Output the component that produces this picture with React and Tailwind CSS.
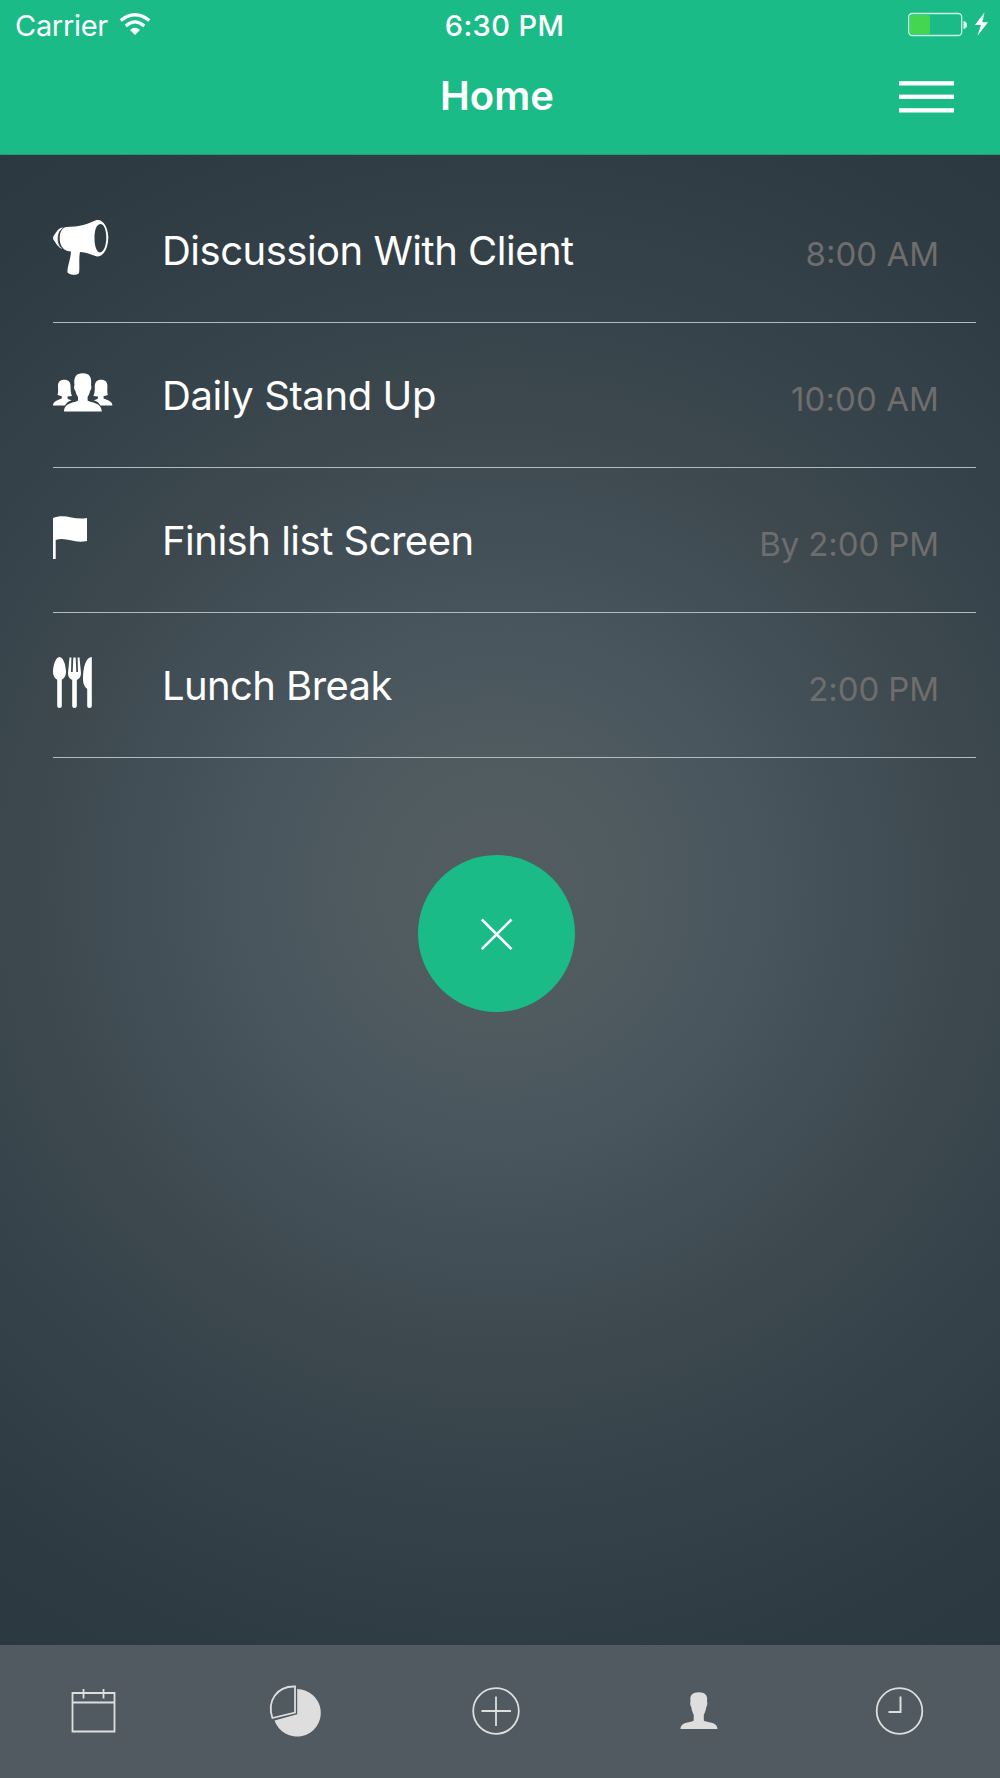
import React from "react";

function StatusBar() {
  return (
    <div className="flex h-[50px] items-center pl-[15px] pr-[11px] text-[29px] leading-none">
      <div className="flex flex-1 items-center gap-[11px]">
        <span className="font-normal tracking-[-0.3px]">Carrier</span>
        <svg width="32" height="24" viewBox="0 0 32 24" fill="none" stroke="#fff">
          <path d="M1.700 7.500 Q16 -3.800 30.300 7.500" strokeWidth="3.400" />
          <path d="M6.800 13 Q16 4.800 25.200 13" strokeWidth="3.200" />
          <path d="M11 17 Q16 12.300 21 17 L16 22 Z" fill="#fff" stroke="none" />
        </svg>
      </div>
      <span className="pl-[5px] font-medium tracking-[0.400px]">6:30 PM</span>
      <div className="flex flex-1 items-center justify-end">
        <svg width="82" height="26" viewBox="0 0 82 26">
          <rect x="1.700" y="1.500" width="53" height="22" rx="3.500" fill="none" stroke="#c9f3e2" strokeWidth="1.300" />
          <rect x="3" y="3" width="20" height="19" rx="1.500" fill="#44d651" />
          <path d="M56.500 9 Q60 9.500 60 13 Q60 16.500 56.500 17 Z" fill="#e8faf3" />
          <path d="M77.500 0.500 L68 13 H74 L70.500 23.800 L81 10.300 H75.300 Z" fill="#fff" />
        </svg>
      </div>
    </div>
  );
}

function Megaphone() {
  return (
    <svg width="60" height="60" viewBox="0 0 60 60" fill="#fff">
      <path fillRule="evenodd" d="M13 9 C27 9 35 6 43 2.300 C49 .5 55 8 55.300 19 C55.300 31 50 39 44 38.500 C38 36.500 34 34.600 27 34 C25.500 42 27 49 26 55 C25 57.500 17 57.500 14.500 54.500 C14 49 17.500 42 18 33.500 C11 33 7 29 6.700 21 C6.600 14 9 10 13 9 Z M47.300 6 C43 6.500 41.500 13 41.500 20 C41.500 28 43.500 34 47 34.500 C51 34 53.300 27 53.300 19.500 C53.300 12 51 6 47.300 6 Z" />
      <path d="M10.500 9.300 C3.500 14 3.500 27 9.500 31 C4.500 29.500 2.800 24.500 .4 21.800 C-.1 20.500 0 18.500 .6 18 C3.500 14 5 10 10.500 9.300 Z" />
      <path d="M7 13 C4.200 18 4.500 25 7.500 29" fill="none" stroke="#303d44" strokeWidth=".7" />
    </svg>
  );
}

function Team() {
  return (
    <svg width="60" height="40" viewBox="0 0 60 40" fill="#fff">
      <path d="M4.500 22 C5.500 19 5 17 5 13 C5 8 8 6.700 11.500 6.700 C15.500 6.700 17.600 9 17.600 14 C17.600 18 17.800 20 19 23 L14.500 23.500 V25.500 C16 27 18 26.600 18.500 27.300 C15 28.500 13 30.500 12 32.500 H0 C0 29 3 27.500 8.800 25.500 V23.300 Z" />
      <path d="M54.900 22 C53.900 19 54.400 17 54.400 13 C54.400 8 51.400 6.700 47.900 6.700 C43.900 6.700 41.800 9 41.800 14 C41.800 18 41.600 20 40.400 23 L44.900 23.500 V25.500 C43.400 27 41.400 26.600 40.900 27.300 C44.400 28.500 46.400 30.500 47.400 32.500 H59.400 C59.400 29 56.400 27.500 50.600 25.500 V23.300 Z" />
      <path d="M21.500 12 C20.500 4 23 .2 29.700 .2 C36.500 .2 39 4 38 12 C39 14 38 17 37 18 C36.600 21 35.200 23 34.600 24 V27.500 C38 30 48.500 29 48.800 38.500 H11 C11.300 29 22 30 25 27.500 V24 C24 22.500 23 21 22.500 18 C21.300 17 20.500 14 21.500 12 Z" />
    </svg>
  );
}

function Flag() {
  return (
    <svg width="36" height="44" viewBox="0 0 36 44" fill="#fff">
      <path d="M0 2 C12 -3 21 4.500 34 2 V25 C21 28 13 20.500 2.700 24 V43 H0 Z" />
    </svg>
  );
}

function Cutlery() {
  return (
    <svg width="40" height="52" viewBox="0 0 40 52" fill="#fff">
      <path d="M6.500 0 C2.500 0 0 9 0 15 C0 19 2 21.500 4.200 22.800 V49 Q4.200 51 6.500 51 T8.800 49 V22.800 C11 21.500 13 19 13 15 C13 9 10.500 0 6.500 0 Z" />
      <path d="M16.500 .4 H18.400 L18 15 H19.700 L20.300 .4 H22.700 L23.300 15 H25 L24.600 .4 H26.500 L28 16 C28 20 26 22 23.800 23 V49 Q23.800 51 21.500 51 T19.200 49 V23 C17 22 15 20 15 16 Z" />
      <path d="M38.800 0 V49 Q38.800 51 36.500 51 T34.200 49 V32 C31 29.500 30 26 30 22 C30 10 33 0 38.800 0 Z" />
    </svg>
  );
}

const items = [
  { title: "Discussion With Client", time: "8:00 AM", Icon: Megaphone, pad: "pt-[63px]", spacing: "tracking-[-0.5px]", timeSpacing: "tracking-[0px]" },
  { title: "Daily Stand Up", time: "10:00 AM", Icon: Team, pad: "pt-[50px]", spacing: "tracking-[-0.400px]", timeSpacing: "tracking-[0.1px]" },
  { title: "Finish list Screen", time: "By 2:00 PM", Icon: Flag, pad: "pt-[48px]", spacing: "tracking-[-0.5px]", timeSpacing: "tracking-[-0.1px]" },
  { title: "Lunch Break", time: "2:00 PM", Icon: Cutlery, pad: "pt-[44px]", spacing: "tracking-[-0.600px]", timeSpacing: "tracking-[-0.1px]" },
];

function Row({ title, time, Icon, pad, spacing, timeSpacing, first }) {
  return (
    <li className={first ? "flex h-[168px] border-b border-[#b4babd]" : "flex h-[145px] border-b border-[#b4babd]"}>
      <div className={"w-[109px] " + pad}>
        <Icon />
      </div>
      <div className="flex flex-1 items-end justify-between whitespace-nowrap pb-[51px] pr-[37px] leading-none">
        <span className={"text-[40px] font-normal " + spacing}>{title}</span>
        <span className={"text-[33px] font-normal text-[#6f6d6d] " + timeSpacing}>{time}</span>
      </div>
    </li>
  );
}

function TabBar() {
  return (
    <nav className="flex h-[133px] items-center justify-between bg-[#505a60] pb-[1px] pl-[62px] pr-[70px]">
      <svg width="60" height="60" viewBox="0 0 60 60" fill="none" stroke="#dedede" strokeWidth="1.800">
        <path d="M10.500 12 H52.500 V50.500 H10.500 Z M10.500 21.500 H52.500 M21.500 8 V17.500 M41.500 8 V17.500" />
      </svg>
      <svg width="60" height="60" viewBox="-0.700 0 60 60">
        <path d="M32.500 8 A23.800 23.800 0 1 1 9.800 39.500 L32.500 33.300 Z" fill="#dedede" />
        <path d="M30.300 5.500 V31.500 L7.700 37 C2 20 12 5 30.300 5.500 Z" fill="none" stroke="#dedede" strokeWidth="1.800" />
      </svg>
      <svg width="60" height="60" viewBox="0 0 60 60" fill="none" stroke="#dedede" strokeWidth="1.800">
        <circle cx="30" cy="30" r="22.800" />
        <path d="M15.500 30 H45 M30 15.500 V45" />
      </svg>
      <svg width="60" height="60" viewBox="-0.500 0 60 60" fill="#dedede">
        <path d="M22 20 C21 14 24 11.200 30.300 11.200 C36.500 11.200 39.500 14 38.500 20 C39.300 22 38.600 25 37.800 26 C37.300 30 36 32 35.300 34 V39.500 C38 42 48.500 40 49 48 H12 C12.500 40 23 42 25.200 39.500 V34 C24.500 32 23.200 30 22.800 26 C22 25 21.200 22 22 20 Z" />
      </svg>
      <svg width="60" height="60" viewBox="0 0 60 60" fill="none" stroke="#dedede">
        <circle cx="29.500" cy="30" r="22.800" strokeWidth="1.800" />
        <path d="M30.500 15.500 V31 H18.500" strokeWidth="2" />
      </svg>
    </nav>
  );
}

export default function App() {
  return (
    <div className="flex h-[1778px] w-[1000px] flex-col bg-[radial-gradient(circle_at_500px_889px,#535d61_0px,#505b60_130px,#4a575e_230px,#434f57_360px,#3d494e_460px,#37444b_570px,#313e45_710px,#2c3941_850px,#2a363e_1030px)] font-['Inter',sans-serif] text-white">
      <header className="h-[155px] border-b border-[#259b77] bg-[#1abb86]">
        <StatusBar />
        <div className="flex h-[92px] items-center">
          <div className="w-[440px]" />
          <h1 className="flex-1 text-[40px] font-semibold leading-none">Home</h1>
          <button className="mr-[46px] flex w-[55px] pt-[2px]" aria-label="Menu">
            <svg width="55" height="34" viewBox="0 0 55 34" fill="#fff">
              <rect y="1.200" width="55" height="4.300" />
              <rect y="14.600" width="55" height="4.300" />
              <rect y="28.200" width="55" height="4.300" />
            </svg>
          </button>
        </div>
      </header>
      <main className="flex flex-1 flex-col">
        <ul className="pl-[53px] pr-[24px]">
          {items.map((item, i) => (
            <Row key={item.title} {...item} first={i === 0} />
          ))}
        </ul>
        <button className="ml-[418px] mt-[97px] flex size-[157px] items-center justify-center rounded-full bg-[#1abb86]" aria-label="Close">
          <svg width="34" height="34" viewBox="0 0 34 34" fill="none" stroke="#fff" strokeWidth="2.600">
            <path d="M1.800 2.500 L31.500 32.200 M31.500 2.500 L1.800 32.200" />
          </svg>
        </button>
      </main>
      <TabBar />
    </div>
  );
}
